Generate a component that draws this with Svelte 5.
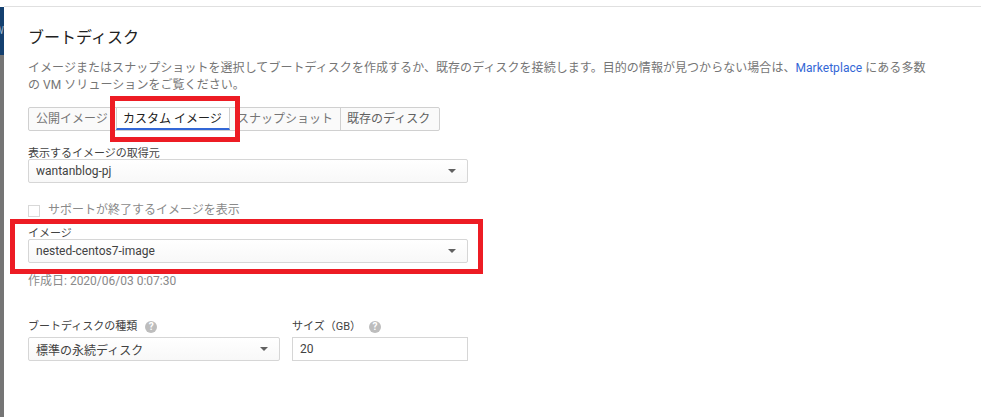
<script>
  const tabs = [
    { label: '公開イメージ', cls: 'pub' },
    { label: 'カスタム イメージ', cls: 'custom active' },
    { label: 'スナップショット', cls: 'snap' },
    { label: '既存のディスク', cls: 'disk' }
  ]
</script>

<div class="page">
  <div class="rail">
    <div class="rail-top">W</div>
  </div>

  <main class="content">
    <h2>ブートディスク</h2>
    <p class="desc">
      イメージまたはスナップショットを選択してブートディスクを作成するか、既存のディスクを接続します。目的の情報が見つからない場合は、<a href="#top">Marketplace</a> にある多数の VM ソリューションをご覧ください。
    </p>

    <div class="tabs">
      {#each tabs as tab}
        <div class={`tab ${tab.cls}`}>{tab.label}</div>
      {/each}
    </div>

    <div class="label source-label">表示するイメージの取得元</div>
    <div class="select wide">
      <span>wantanblog-pj</span>
      <i class="caret"></i>
    </div>

    <label class="check">
      <span class="box"></span>
      サポートが終了するイメージを表示
    </label>

    <div class="label image-label">イメージ</div>
    <div class="select wide">
      <span>nested-centos7-image</span>
      <i class="caret"></i>
    </div>
    <div class="created">作成日: 2020/06/03 0:07:30</div>

    <div class="row">
      <div class="col type">
        <div class="label">ブートディスクの種類 <b class="help">?</b></div>
        <div class="select">
          <span>標準の永続ディスク</span>
          <i class="caret"></i>
        </div>
      </div>
      <div class="col size">
        <div class="label">サイズ（GB） <b class="help">?</b></div>
        <div class="input">20</div>
      </div>
    </div>
  </main>

  <div class="mark mark-tab"></div>
  <div class="mark mark-image"></div>
</div>

<style>
  :global(body) {
    margin: 0;
    background: #fff;
  }

  .page {
    position: relative;
    display: flex;
    width: 981px;
    height: 417px;
    overflow: hidden;
    font-family: Roboto, "Noto Sans CJK JP", sans-serif;
    font-size: 12px;
    color: #212121;
    background: #fff;
  }

  .rail {
    width: 4px;
    flex: none;
    margin-top: 7px;
    background: #757575;
  }
  .rail-top {
    height: 48px;
    overflow: hidden;
    background: #14406f;
    color: #9db4cc;
    font-size: 10px;
    line-height: 48px;
    text-indent: -5px;
  }

  .content {
    flex: 1;
    border-top: 1px solid #e0e0e0;
    margin-top: 6px;
    padding: 19px 0 0 24px;
  }

  h2 {
    margin: 0;
    font-size: 16px;
    font-weight: 400;
    line-height: 24px;
    color: #212121;
  }

  .desc {
    width: 900px;
    margin: 10px 0 0;
    line-height: 17px;
    letter-spacing: 0.05px;
    color: #757575;
  }
  .desc a {
    color: #3367d6;
    text-decoration: none;
  }

  .tabs {
    display: flex;
    width: fit-content;
    height: 22px;
    margin-top: 13px;
    border: 1px solid #d0d0d0;
    border-radius: 2px;
    background: #fafafa;
  }
  .tab {
    box-sizing: border-box;
    padding: 0 6px;
    line-height: 22px;
    white-space: nowrap;
    color: #616161;
    border-left: 1px solid #d0d0d0;
  }
  .tab:first-child {
    border-left: 0;
  }
  .pub {
    width: 87px;
    padding-left: 7px;
    overflow: hidden;
    color: #757575;
  }
  .custom {
    width: 114px;
    color: #212121;
    background: #fff;
    border-right: 1px solid #d0d0d0;
    border-bottom: 2px solid #3367d6;
  }
  .snap {
    width: 110px;
    padding-left: 7px;
    border-left: 0;
    color: #757575;
  }
  .disk {
    width: 99px;
  }

  .label {
    display: flex;
    align-items: center;
    gap: 8px;
    height: 14px;
    margin-bottom: -2px;
    font-size: 11px;
    line-height: 14px;
    color: #424242;
  }
  .source-label {
    margin-top: 16px;
  }
  .image-label {
    margin-top: 10px;
  }

  .select {
    box-sizing: border-box;
    display: flex;
    align-items: center;
    justify-content: space-between;
    height: 24px;
    padding: 0 11px 0 7px;
    border: 1px solid #d6d6d6;
    border-radius: 2px;
    color: #424242;
    background: linear-gradient(#fff, #f8f8f8);
  }
  .wide {
    width: 440px;
  }

  .caret {
    width: 0;
    height: 0;
    border-left: 4px solid transparent;
    border-right: 4px solid transparent;
    border-top: 4px solid #616161;
  }

  .check {
    display: flex;
    align-items: flex-start;
    gap: 8px;
    height: 14px;
    margin-top: 20px;
    line-height: 14px;
    color: #8a8a8a;
  }
  .box {
    box-sizing: border-box;
    width: 12px;
    height: 12px;
    margin-top: 2px;
    border: 1px solid #d8d8d8;
  }

  .created {
    margin-top: 11px;
    line-height: 14px;
    color: #8a8a8a;
  }

  .row {
    display: flex;
    gap: 12px;
    margin-top: 32px;
  }
  .col .label {
    margin-bottom: 3px;
  }
  .type {
    width: 252px;
  }
  .size {
    width: 176px;
  }

  .help {
    width: 12px;
    height: 12px;
    border-radius: 50%;
    background: #bdbdbd;
    color: #fff;
    font-size: 10px;
    line-height: 12px;
    text-align: center;
  }

  .input {
    box-sizing: border-box;
    height: 24px;
    padding: 0 7px;
    line-height: 22px;
    border: 1px solid #d6d6d6;
    color: #424242;
  }

  .mark {
    position: absolute;
    box-sizing: border-box;
    border: 5px solid #ed1c24;
  }
  .mark-tab {
    left: 110px;
    top: 96px;
    width: 130px;
    height: 46px;
  }
  .mark-image {
    left: 10px;
    top: 219px;
    width: 473px;
    height: 55px;
  }
</style>
